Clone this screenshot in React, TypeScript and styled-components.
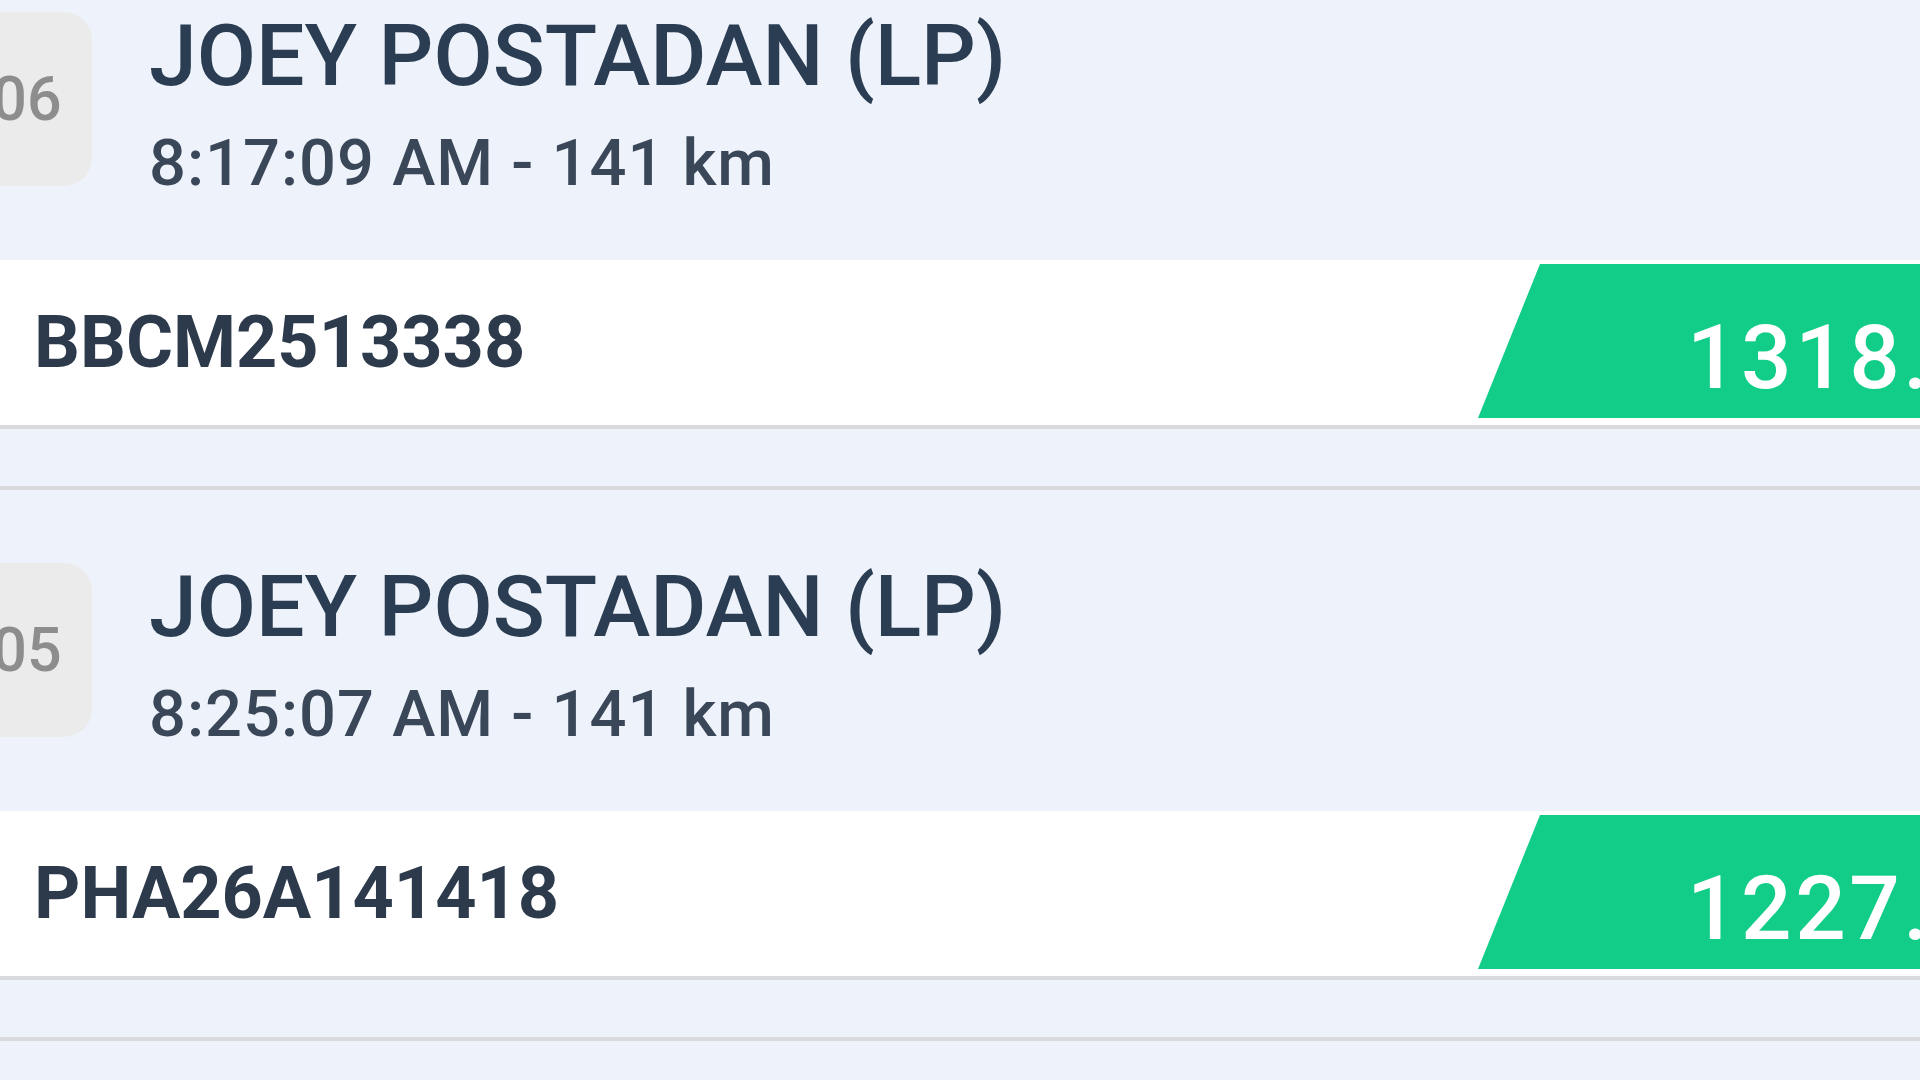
import styled, { createGlobalStyle } from 'styled-components';

const GlobalStyle = createGlobalStyle`
  html, body { margin: 0; padding: 0; background: #eef3fb; overflow: hidden; }
  body { font-family: Roboto, "Noto Sans", "Liberation Sans", sans-serif; }
`;

const Screen = styled.div`
  width: 1920px; height: 1080px; overflow: hidden; background: #eef3fb;
`;

// list is scrolled a little, the first card starts above the viewport
const List = styled.div`
  display: flex; flex-direction: column; margin-top: -61px;
`;

const Card = styled.div`
  display: flex; flex-direction: column; padding-bottom: 57px; border-bottom: 4px solid #d9dadc;
`;

const Header = styled.div`
  display: flex; align-items: flex-start; height: 321px; box-sizing: border-box; padding-top: 73px;
`;

const Badge = styled.div`
  flex: none; width: 130px; height: 174px; margin-left: -38px; border-radius: 28px; background: #ebebeb;
  display: flex; align-items: center; justify-content: center;
  font-size: 61px; font-weight: 500; color: #8d8d8d;
`;

const Info = styled.div`
  display: flex; flex-direction: column; margin-left: 57px;
`;

const Name = styled.div`
  font-size: 86px; line-height: 87px; font-weight: 500; color: #2b3d52; white-space: nowrap;
`;

const Meta = styled.div`
  margin-top: 32px; font-size: 65px; line-height: 65px; font-weight: 500; letter-spacing: 1px;
  color: #3a4759; white-space: nowrap;
`;

const Row = styled.div`
  display: flex; align-items: center; height: 165px; background: #fff; border-bottom: 4px solid #d9dadc;
  overflow: hidden;
`;

const Code = styled.div`
  padding-left: 34px; font-size: 72px; line-height: 72px; font-weight: 700; color: #2c3a4c; white-space: nowrap;
`;

const Amount = styled.div`
  margin-left: auto; align-self: flex-start; margin-top: 4px; width: 442px; height: 154px; box-sizing: border-box;
  padding: 49px 0 0 209px; background: #12cd88; clip-path: polygon(62px 0, 100% 0, 100% 100%, 0 100%);
  font-size: 89px; line-height: 89px; font-weight: 500; letter-spacing: 3.5px; color: #fff;
  white-space: nowrap; overflow: hidden;
`;

const trips = [
  { idx: '06', name: 'JOEY POSTADAN (LP)', meta: '8:17:09 AM - 141 km', code: 'BBCM2513338', amount: '1318.00' },
  { idx: '05', name: 'JOEY POSTADAN (LP)', meta: '8:25:07 AM - 141 km', code: 'PHA26A141418', amount: '1227.00' },
];

export default function App() {
  return (
    <Screen>
      <GlobalStyle />
      <List>
        {trips.map((t) => (
          <Card key={t.idx}>
            <Header>
              <Badge>{t.idx}</Badge>
              <Info>
                <Name>{t.name}</Name>
                <Meta>{t.meta}</Meta>
              </Info>
            </Header>
            <Row>
              <Code>{t.code}</Code>
              <Amount>{t.amount}</Amount>
            </Row>
          </Card>
        ))}
      </List>
    </Screen>
  );
}
